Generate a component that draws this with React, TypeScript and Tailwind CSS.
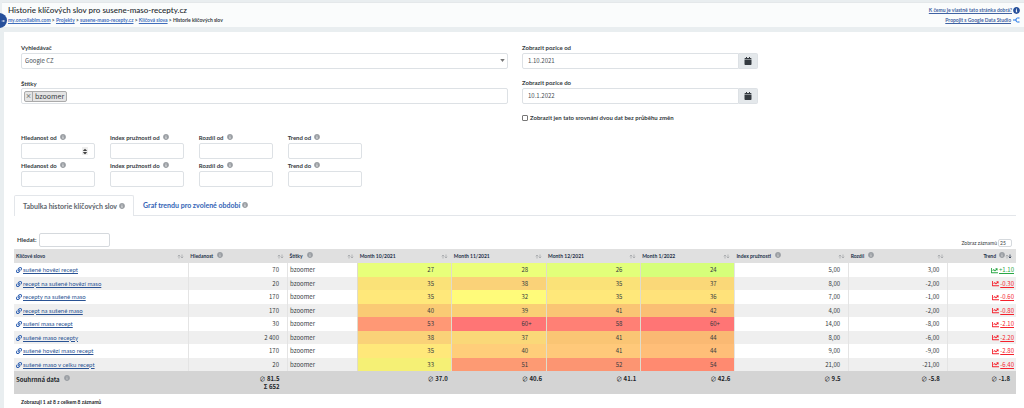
import { FaCalendar, FaChartLine, FaInfoCircle, FaLink, FaSort } from "react-icons/fa";

type Row = {
  keyword: string;
  volume: string;
  months: [string, string][];
  index: string;
  diff: string;
  trend: string;
};

const rows: Row[] = [
  { keyword: "sušené hovězí recept", volume: "70", months: [["27", "bg-[#e8ff7a]"], ["28", "bg-[#ecff7a]"], ["26", "bg-[#e2ff7a]"], ["24", "bg-[#d6ff7a]"]], index: "5,00", diff: "3,00", trend: "+1.10" },
  { keyword: "recept na sušené hovězí maso", volume: "20", months: [["35", "bg-[#fae278]"], ["38", "bg-[#fad278]"], ["35", "bg-[#fae278]"], ["37", "bg-[#fad878]"]], index: "8,00", diff: "-2,00", trend: "-0.30" },
  { keyword: "recepty na sušené maso", volume: "170", months: [["35", "bg-[#ffe87a]"], ["32", "bg-[#fffb7a]"], ["35", "bg-[#ffe87a]"], ["36", "bg-[#ffe27a]"]], index: "7,00", diff: "-1,00", trend: "-0.60" },
  { keyword: "recept na sušené maso", volume: "170", months: [["40", "bg-[#faca74]"], ["39", "bg-[#facf75]"], ["41", "bg-[#fac574]"], ["42", "bg-[#fabf74]"]], index: "4,00", diff: "-2,00", trend: "-0.80" },
  { keyword: "sušení masa recept", volume: "30", months: [["53", "bg-[#ff9875]"], ["60+", "bg-[#ff7575]"], ["58", "bg-[#ff8075]"], ["60+", "bg-[#ff7575]"]], index: "14,00", diff: "-8,00", trend: "-2.10" },
  { keyword: "sušené maso recepty", volume: "2 400", months: [["38", "bg-[#fad278]"], ["37", "bg-[#fad878]"], ["41", "bg-[#fac574]"], ["44", "bg-[#fab973]"]], index: "8,00", diff: "-6,00", trend: "-2.20" },
  { keyword: "sušené hovězí maso recept", volume: "170", months: [["35", "bg-[#ffe87a]"], ["40", "bg-[#ffce7a]"], ["41", "bg-[#ffc97a]"], ["44", "bg-[#ffbe78]"]], index: "9,00", diff: "-9,00", trend: "-2.80" },
  { keyword: "sušené maso v celku recept", volume: "20", months: [["33", "bg-[#f5f075]"], ["51", "bg-[#fd9a73]"], ["52", "bg-[#fc9572]"], ["54", "bg-[#ff8a70]"]], index: "21,00", diff: "-21,00", trend: "-6.40" },
];

const filters = [
  { name: "Hledanost", id: "volume" },
  { name: "Index pružnosti", id: "index" },
  { name: "Rozdíl", id: "diff" },
  { name: "Trend", id: "trend" },
];

const dataFont = "font-['Noto_Sans_CJK_JP','Noto_Sans',sans-serif]";
const labelFont = "font-['Lato','Noto_Sans',sans-serif]";
const field = `${dataFont} block w-full rounded-[2px] border border-[#dde1e5] bg-white text-[6px] text-[#495057]`;

function Info() {
  return <FaInfoCircle className="inline-block size-[6px] shrink-0 text-[#9a9ea3]" />;
}

function Sort({ active = false }: { active?: boolean }) {
  return (
    <svg viewBox="0 0 14 10" className="h-[5px] w-[7px] shrink-0" fill="none" strokeWidth="1.5">
      <path d="M4 9V2M1.5 4.5 4 2l2.500 2.500" stroke="#a3a6aa" />
      <path d="M10 1v7M7.500 5.500 10 8l2.500-2.500" stroke={active ? "#23304a" : "#a3a6aa"} />
    </svg>
  );
}

function Head({ label, info = false }: { label: string; info?: boolean }) {
  return (
    <th scope="col" className="pr-1 pl-[2px] text-left">
      <span className="flex items-center">
        {label}
        {info && <span className="mb-[3px] ml-1 flex"><Info /></span>}
        <span className="ml-auto"><Sort /></span>
      </span>
    </th>
  );
}

function DateField({ id, label, value }: { id: string; label: string; value: string }) {
  return (
    <div>
      <label htmlFor={id} className="block h-[10px] leading-[10px] font-bold">{label}</label>
      <div className="flex h-4">
        <input id={id} defaultValue={value} className={`${dataFont} min-w-0 flex-1 rounded-l-[2px] border border-[#dde1e5] px-[5px] text-[6px] text-[#495057]`} />
        <button type="button" aria-label={label} className="flex w-[19px] items-center justify-center rounded-r-[2px] border border-l-0 border-[#dde1e5] bg-[#e4e8eb]">
          <FaCalendar className="size-2 text-[#343a40]" />
        </button>
      </div>
    </div>
  );
}

function Average({ value }: { value: string }) {
  return (
    <span className="whitespace-nowrap">
      <span className="font-normal">∅</span> {value}
    </span>
  );
}

export default function App() {
  return (
    <div lang="cs" className={`${labelFont} min-h-screen bg-[#e9eef0] pt-[2px] text-[6px] leading-[8px] text-[#343a40]`}>
      <header className="relative ml-[2px] flex justify-between border-t border-[#e4e8ea] bg-[#fafcfc] pt-[2px] pr-1 pb-[2px] pl-[6px]">
        <button type="button" aria-label="Otevřít menu" className="absolute top-[10px] -left-[10px] flex size-[15px] items-center justify-end rounded-full bg-[#27509b] pr-[2px] text-white">
          <svg viewBox="0 0 6 6" className="size-1" fill="none" stroke="currentColor"><path d="M1 3h4M3.500 1.500 5 3 3.500 4.500" /></svg>
        </button>
        <div>
          <h1 className="text-[8px] leading-[10px] font-medium text-[#23282d]">Historie klíčových slov pro susene-maso-recepty.cz</h1>
          <nav aria-label="Drobečková navigace" className="h-[10px] text-[5px] leading-[10px] font-bold">
            <a href="#home" className="text-[#3f6dbb] underline">my.oncollabim.com</a> &gt;{" "}
            <a href="#projects" className="text-[#3f6dbb] underline">Projekty</a> &gt;{" "}
            <a href="#project" className="text-[#3f6dbb] underline">susene-maso-recepty.cz</a> &gt;{" "}
            <a href="#keywords" className="text-[#3f6dbb] underline">Klíčová slova</a> &gt; Historie klíčových slov
          </nav>
        </div>
        <div className="flex flex-col items-end text-[5px] leading-[10px] font-bold text-[#3f62a3]">
          <a href="#help" className="flex h-[10px] items-center gap-px underline">
            K čemu je vlastně tato stránka dobrá?<FaInfoCircle className="size-[7px] text-[#27509b]" />
          </a>
          <a href="#studio" className="flex h-[10px] items-center gap-[2px] underline">
            Propojit s Google Data Studio
            <svg viewBox="0 0 14 12" className="h-[6px] w-[7px]" fill="none" stroke="#1a73e8" strokeWidth="2">
              <path d="M0 6h7M13 2H9a3 3 0 0 0-3 3v2a3 3 0 0 0 3 3h4" />
            </svg>
          </a>
        </div>
      </header>

      <main className="mt-[5px] ml-1 bg-white pt-[11px] pr-2 pb-[2px] pl-[10px]">
        <form>
          <div className="grid grid-cols-2">
            <div className="flex flex-col gap-[10px] px-[7px]">
              <div>
                <label htmlFor="engine" className="block h-[10px] leading-[10px] font-bold">Vyhledávač</label>
                <div className="relative">
                  <select id="engine" className={`${field} h-4 appearance-none px-[3px]`}>
                    <option>Google CZ</option>
                  </select>
                  <svg viewBox="0 0 6 4" className="pointer-events-none absolute top-[6px] right-[3px] h-[3px] w-[5px]"><path d="M0 0h6L3 4z" fill="#777" /></svg>
                </div>
              </div>
              <div>
                <label htmlFor="tags" className="block h-[9px] leading-[9px] font-bold">Štítky</label>
                <div className={`${dataFont} flex h-4 items-center rounded-[2px] border border-[#dde1e5] px-[2px]`}>
                  <span className="flex h-[11px] items-center rounded-[2px] border border-[#aaa] bg-[#e4e4e4] text-[7px] text-[#343a40]">
                    <button type="button" aria-label="Odebrat bzoomer" className="flex h-full w-2 items-center justify-center border-r border-[#aaa] text-[6px] font-bold text-[#777]">×</button>
                    <span className="px-[2px]">bzoomer</span>
                  </span>
                  <input id="tags" className="h-full min-w-0 flex-1 outline-none" />
                </div>
              </div>
            </div>
            <div className="px-[7px]">
              <div className="flex w-[48.5%] flex-col gap-[9px]">
                <DateField id="from" label="Zobrazit pozice od" value="1.10.2021" />
                <DateField id="to" label="Zobrazit pozice do" value="10.1.2022" />
              </div>
              <label className="mt-[10px] flex items-center gap-[2px] font-bold">
                <input type="checkbox" className="m-0 size-[6px] appearance-none rounded-[1px] border border-[#777] bg-white" />
                Zobrazit jen tato srovnání dvou dat bez průběhu změn
              </label>
            </div>
          </div>

          <div className="mt-[11px] ml-[7px] grid w-[34%] grid-cols-4 gap-x-[15px]">
            {["od", "do"].map((bound) =>
              filters.map((f) => (
                <div key={f.id + bound} className="relative pb-[2px]">
                  <label htmlFor={`${f.id}-${bound}`} className="flex h-[10px] items-center gap-[3px] leading-[10px] font-bold whitespace-nowrap">
                    {f.name} {bound}
                    <span className="mb-[3px] flex"><Info /></span>
                  </label>
                  <input
                    id={`${f.id}-${bound}`}
                    type="number"
                    className={`${field} h-4 [appearance:textfield] px-1 [&::-webkit-inner-spin-button]:appearance-none`}
                  />
                  {f.id === "volume" && bound === "od" && (
                    <span className="pointer-events-none absolute top-[14px] right-[7px] flex h-2 w-[6px] items-center justify-center bg-[#eee]">
                      <FaSort className="size-[7px] text-[#444]" />
                    </span>
                  )}
                </div>
              )),
            )}
          </div>
        </form>

        <div role="tablist" className="mt-[6px] flex border-b border-[#e3e6ea] text-[7px] font-bold">
          <button type="button" role="tab" aria-selected="true" className="-mb-px flex h-[21px] items-center gap-[2px] rounded-t-[2px] border border-b-0 border-[#e3e6ea] bg-white px-[8px] text-[#5c646b]">
            Tabulka historie klíčových slov <Info />
          </button>
          <button type="button" role="tab" aria-selected="false" className="flex h-5 items-center gap-[2px] px-[9px] text-[#3163b5]">
            Graf trendu pro zvolené období <Info />
          </button>
        </div>

        <div className="mt-[16px] mb-[2px] flex h-[15px] items-center justify-between">
          <label className="ml-[3px] flex items-center gap-[3px] text-[6px] font-bold">
            Hledat:
            <input type="search" className="h-[14px] w-[71px] rounded-[2px] border border-[#d5d9dd] px-1" />
          </label>
          <label className="mr-1 flex items-center gap-px self-end text-[5px]">
            Zobraz záznamů
            <input defaultValue="25" className="h-2 w-[14px] rounded-[2px] border border-[#d5d9dd] px-px text-[5px]" />
          </label>
        </div>

        <table className={`${dataFont} w-full table-fixed border-collapse`}>
          <colgroup>
            <col className="w-[17.4%]" />
            <col className="w-[9.9%]" />
            <col className="w-[7%]" />
            <col className="w-[9.4%]" />
            <col className="w-[9.4%]" />
            <col className="w-[9.4%]" />
            <col className="w-[9.4%]" />
            <col className="w-[11.4%]" />
            <col className="w-[9.9%]" />
            <col className="w-[6.8%]" />
          </colgroup>
          <thead>
            <tr className={`${labelFont} h-[14px] bg-[#e0e0e0] text-[5px] font-bold text-[#23304a]`}>
              <Head label="Klíčové slovo" />
              <Head label="Hledanost" info />
              <Head label="Štítky" info />
              <Head label="Month 10/2021" />
              <Head label="Month 11/2021" />
              <Head label="Month 12/2021" />
              <Head label="Month 1/2022" />
              <Head label="Index pružnosti" info />
              <Head label="Rozdíl" info />
              <th scope="col" className="pr-1">
                <span className="flex items-center justify-end">
                  Trend
                  <span className="mb-[3px] ml-[3px] flex"><Info /></span>
                  <Sort active />
                </span>
              </th>
            </tr>
          </thead>
          <tbody>
            {rows.map((row) => (
              <tr key={row.keyword} className="odd:h-[14px] even:h-[13px] even:bg-[#efefef]">
                <td className={`${labelFont} pl-[2px]`}>
                  <a href="#keyword" className="flex items-center gap-px text-[#2a5394] underline">
                    <FaLink className="size-[6px] text-[#2a5db0]" />
                    {row.keyword}
                  </a>
                </td>
                <td className="border-l border-[#e4e4e4] pr-2 text-right">{row.volume}</td>
                <td className="border-l border-[#e4e4e4] pl-[2px]">bzoomer</td>
                {row.months.map(([value, color], i) => (
                  <td key={i} className={`${color} border-l border-[#e0dccb] text-right`}>
                    <span className="inline-block w-6 text-left">{value}</span>
                  </td>
                ))}
                <td className="border-l border-[#e4e4e4] pr-2 text-right">{row.index}</td>
                <td className="border-l border-[#e4e4e4] pr-2 text-right">{row.diff}</td>
                <td className="border-l border-[#e4e4e4] pr-[2px]">
                  <a href="#trend" className={`flex items-center justify-end gap-px underline ${row.trend.startsWith("+") ? "text-[#28a745]" : "text-[#f5222d]"}`}>
                    <FaChartLine className="size-[7px]" />
                    {row.trend}
                  </a>
                </td>
              </tr>
            ))}
          </tbody>
          <tfoot>
            <tr className="h-[23px] bg-[#d4d4d4] align-top font-bold text-[#212529]">
              <td className="pt-1 pl-[2px]">
                <span className="flex items-center gap-1">
                  Souhrnná data <span className="mb-[3px] flex"><Info /></span>
                </span>
              </td>
              <td className="pt-1 pr-2 text-right">
                <Average value="81.5" />
                <br />Σ 652
              </td>
              <td />
              {["37.0", "40.6", "41.1", "42.6"].map((v) => (
                <td key={v} className="pt-1 text-right">
                  <span className="inline-block w-6 text-left"><Average value={v} /></span>
                </td>
              ))}
              <td className="pt-1 pr-2 text-right"><Average value="9.5" /></td>
              <td className="pt-1 pr-2 text-right"><Average value="-5.8" /></td>
              <td className="pt-1 pr-[6px] text-right"><Average value="-1.8" /></td>
            </tr>
          </tfoot>
        </table>
        <p className="mt-1 ml-[7px] text-[5px] font-bold text-[#212529]">Zobrazuji 1 až 8 z celkem 8 záznamů</p>
      </main>
    </div>
  );
}
